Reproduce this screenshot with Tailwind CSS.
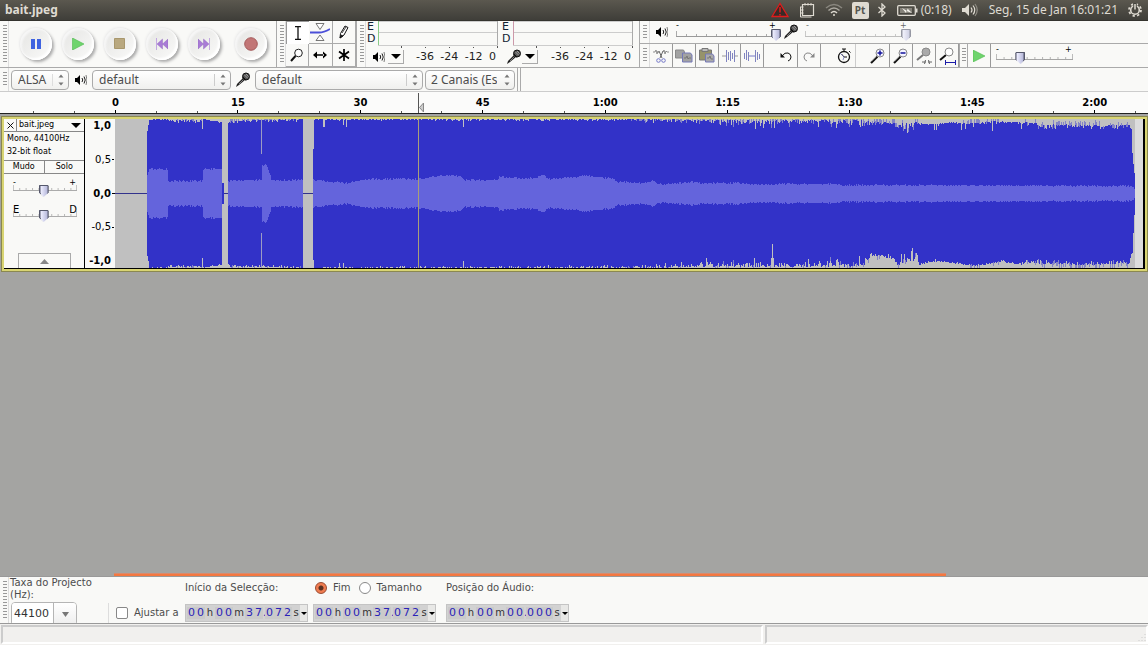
<!DOCTYPE html>
<html lang="pt">
<head>
  <meta charset="UTF-8">
  <meta name="viewport" content="width=device-width, initial-scale=1.0">
  <title>bait.jpeg</title>
  <script src="https://cdn.jsdelivr.net/npm/@tailwindcss/browser@4"></script>
</head>
<body class="h-screen flex flex-col overflow-hidden bg-[#f9f9f7] text-[#4c4c4c] text-[10px] leading-3 select-none font-['DejaVu_Sans',sans-serif]">

  <!-- shared icons -->
  <svg class="hidden">
    <symbol id="speaker" viewBox="0 0 12 12">
      <path d="M0 4h2l3-3v10l-3-3H0z" fill="currentColor"/>
      <path d="M7 4q1.500 2 0 4M9 2.500q2.500 3.500 0 7" fill="none" stroke="currentColor" stroke-width=".9"/>
      <path d="M11 1q2 5 0 10" fill="none" stroke="currentColor" stroke-width=".5"/>
    </symbol>
    <symbol id="mic" viewBox="0 0 16 16">
      <path d="M1 15l1-3 6-6 2 2-6 5z" fill="#222"/>
      <path d="M4 12l5-5" stroke="#999" stroke-width=".8"/>
      <circle cx="11" cy="4.500" r="3.500" fill="#555" stroke="#111"/>
      <path d="M9.500 3l3 3M9 5l2 2M11 2l2.500 2.500" stroke="#ccc" stroke-width=".6"/>
      <path d="M8 5l3 3" stroke="#111" stroke-width="1.500"/>
    </symbol>
    <symbol id="arrows" viewBox="0 0 6 12">
      <path d="M.5 3.500L3 .5l2.500 3zM.5 8.500L3 11.500l2.500-3z" fill="#777"/>
    </symbol>
    <symbol id="lens" viewBox="0 0 20 20">
      <path d="M3 17l6.500-6.500" stroke="#111" stroke-width="2.200"/>
      <path d="M3.500 15.500l5-5" stroke="#aaa" stroke-width=".6"/>
      <circle cx="12" cy="7" r="4" fill="#f4f4ff" stroke="#888"/>
    </symbol>
    <symbol id="ticks" viewBox="0 0 100 6" preserveAspectRatio="none">
      <path d="M.5 0v5M10.500 3v2M20.500 3v2M30.500 3v2M40.500 3v2M50.500 3v2M60.500 3v2M70.500 3v2M80.500 3v2M90.500 3v2M99.500 0v5" stroke="#aaa"/>
      <path d="M0 5.500h100" stroke="#999"/>
    </symbol>
  </svg>

  <!-- desktop panel -->
  <header class="h-[21px] shrink-0 flex items-center pl-[5px] pr-[6px] bg-linear-to-b from-[#5b584f] to-[#3f3e39] border-b border-[#34332e] text-[#dfdbd2] text-xs font-['Noto_Sans',sans-serif]">
    <h1 class="font-bold flex-1">bait.jpeg</h1>
    <svg class="w-[18px] h-4 mr-[10px]" viewBox="0 0 18 16"><path d="M9 1.500L1 14.500h16z" fill="#3a2a27" stroke="#e01b1b" stroke-width="1.300"/><path d="M9 5v5.500M9 12v1.500" stroke="#e01b1b" stroke-width="1.500"/></svg>
    <svg class="w-4 h-4 mr-[10px]" viewBox="0 0 16 16" fill="none" stroke="#dfdbd2"><path d="M3.500 2.500h11v11h-11z" stroke-width="1.200"/><path d="M1.500 5v10h11" stroke-width="1"/><path d="M1 5h3.500M1 8h3.500M1 11h3.500M6 1v2.500M9 1v2.500M12 1v2.500"/></svg>
    <svg class="w-[18px] h-[14px] mr-[9px]" viewBox="0 0 18 14" fill="none" stroke="#aaa79f" stroke-width="1.500"><path d="M1 5q8-7 16 0" stroke="#8a877f"/><path d="M3.500 7.500q5.500-5 11 0"/><path d="M6 10q3-3 6 0" stroke="#dfdbd2"/><circle cx="9" cy="12" r="1" fill="#dfdbd2" stroke="none"/></svg>
    <span class="w-[17px] h-[17px] mr-[8px] rounded-xs bg-[#dfdbd2] text-[#55544e] text-[10px] leading-4 font-bold text-center">Pt</span>
    <svg class="w-[10px] h-[14px] mr-[10px]" viewBox="0 0 10 14"><path d="M1.500 4l6.500 6-3 3V1l3 3-6.500 6" fill="none" stroke="#dfdbd2" stroke-width="1.300"/></svg>
    <svg class="w-[21px] h-[11px] mr-[3px]" viewBox="0 0 21 11"><rect x=".7" y=".7" width="17.600" height="9.600" rx="1" fill="none" stroke="#dfdbd2" stroke-width="1.300"/><path d="M19 3.500h1.500v4H19z" fill="#dfdbd2"/><path d="M3 3h12v5H3z" fill="#85827a"/><path d="M5 3l5 3 .5-2.500L15 8l-5.500-2L9 8z" fill="#f4f2ec"/></svg>
    <span class="mr-[10px]">(0:18)</span>
    <svg class="w-4 h-[14px] mr-[11px]" viewBox="0 0 16 14"><path d="M0 5h3l4-4v12L3 9H0z" fill="#dfdbd2"/><path d="M9 4.500q2 2.500 0 5M11 2.500q3.500 4.500 0 9" fill="none" stroke="#dfdbd2" stroke-width="1.200"/><path d="M13 1q4.500 6 0 12" fill="none" stroke="#8f8c84" stroke-width="1.200"/></svg>
    <time class="mr-[10px]">Seg, 15 de Jan 16:01:21</time>
    <svg class="w-[14px] h-[14px]" viewBox="0 0 14 14"><circle cx="7" cy="7" r="4.300" fill="none" stroke="#dfdbd2" stroke-width="1.600"/><circle cx="7" cy="7" r="6" fill="none" stroke="#dfdbd2" stroke-width="1.800" stroke-dasharray="2.300 2.420"/><path d="M7 0v7" stroke="#45443e" stroke-width="3.500"/><path d="M7 1v5.500" stroke="#dfdbd2" stroke-width="1.500"/></svg>
  </header>

  <!-- upper toolbars -->
  <div class="h-[47px] shrink-0 flex border-b border-[#aaa]">
    <section class="w-[277px] shrink-0 flex border-r border-[#aaa]">
      <div class="w-[9px] border-r border-[#ddd] py-1 pl-[3px]"><div class="w-1 h-full bg-[repeating-linear-gradient(#999_0_1px,transparent_1px_3px)]"></div></div>
      <div class="flex items-center gap-[10px] pl-[11px]" id="transport">
        <button aria-label="Pausa" class="size-8 rounded-full flex items-center justify-center bg-linear-to-br from-[#e4e4e2] to-[#fbfbfa] shadow-[2px_2px_3px_#aaa,-1px_-1px_2px_#eee,inset_-2px_-2px_2px_#fff,inset_2px_2px_2px_#f6f6f6]"><svg class="size-3" viewBox="0 0 12 12"><path d="M1 1h4v10H1zM7 1h4v10H7z" fill="#3f63e0"/></svg></button>
        <button aria-label="Tocar" class="size-8 rounded-full flex items-center justify-center bg-linear-to-br from-[#e4e4e2] to-[#fbfbfa] shadow-[2px_2px_3px_#aaa,-1px_-1px_2px_#eee,inset_-2px_-2px_2px_#fff,inset_2px_2px_2px_#f6f6f6]"><svg class="size-3" viewBox="0 0 12 12"><path d="M.5 0v12L12 6z" fill="#6fd46d" stroke="#4eb84e" stroke-width=".6"/></svg></button>
        <button aria-label="Parar" class="size-8 rounded-full flex items-center justify-center bg-linear-to-br from-[#e4e4e2] to-[#fbfbfa] shadow-[2px_2px_3px_#aaa,-1px_-1px_2px_#eee,inset_-2px_-2px_2px_#fff,inset_2px_2px_2px_#f6f6f6]"><svg class="size-3" viewBox="0 0 12 12"><path d="M.5.5h10v10H.5z" fill="#b9a87f" stroke="#a8976d"/></svg></button>
        <button aria-label="Início" class="size-8 rounded-full flex items-center justify-center bg-linear-to-br from-[#e4e4e2] to-[#fbfbfa] shadow-[2px_2px_3px_#aaa,-1px_-1px_2px_#eee,inset_-2px_-2px_2px_#fff,inset_2px_2px_2px_#f6f6f6]"><svg class="size-3" viewBox="0 0 12 12"><path d="M.5 0v12" stroke="#c3a8e0"/><path d="M6.500 1v10L1 6zM12 1v10L6.500 6z" fill="#a97bd6" stroke="#8b62b8" stroke-width=".4"/></svg></button>
        <button aria-label="Fim" class="size-8 rounded-full flex items-center justify-center bg-linear-to-br from-[#e4e4e2] to-[#fbfbfa] shadow-[2px_2px_3px_#aaa,-1px_-1px_2px_#eee,inset_-2px_-2px_2px_#fff,inset_2px_2px_2px_#f6f6f6]"><svg class="size-3" viewBox="0 0 12 12"><path d="M11.500 0v12" stroke="#c3a8e0"/><path d="M0 1v10l5.500-5zM5.500 1v10L11 6z" fill="#a97bd6" stroke="#8b62b8" stroke-width=".4"/></svg></button>
        <button aria-label="Gravar" class="size-8 ml-[5px] rounded-full flex items-center justify-center bg-linear-to-br from-[#e4e4e2] to-[#fbfbfa] shadow-[2px_2px_3px_#aaa,-1px_-1px_2px_#eee,inset_-2px_-2px_2px_#fff,inset_2px_2px_2px_#f6f6f6]"><svg class="size-[14px]" viewBox="0 0 14 14"><circle cx="7" cy="7" r="6.300" fill="#c27676" stroke="#a55c5c"/></svg></button>
      </div>
    </section>

    <section class="w-[80px] shrink-0 flex border-r border-[#aaa]">
      <div class="w-[9px] border-r border-[#ddd] py-1 pl-[3px]"><div class="w-1 h-full bg-[repeating-linear-gradient(#999_0_1px,transparent_1px_3px)]"></div></div>
      <div class="flex-1 grid grid-cols-3 grid-rows-2 text-black">
        <button aria-label="Selecção" class="flex items-center justify-center border-l border-t border-[#999] bg-white"><svg class="w-2 h-[14px]" viewBox="0 0 8 14"><path d="M1 .5h6M1 13.500h6M4 1v12" stroke="#111" stroke-width="1.300"/></svg></button>
        <button aria-label="Envelope" class="flex items-center justify-center border-r border-b border-[#aaa]"><svg class="w-5 h-[18px]" viewBox="0 0 20 18"><path d="M6 .5h8l-4 6zM6 17.500h8L10 12z" fill="#fff" stroke="#555" stroke-width=".8"/><path d="M0 9.500h9q5 0 11-3.500" fill="none" stroke="#4c50d8" stroke-width="1.800"/></svg></button>
        <button aria-label="Desenho" class="flex items-center justify-center border-r border-b border-[#aaa]"><svg class="w-[10px] h-[14px]" viewBox="0 0 10 14"><path d="M1 13l.5-4.500L6 1l3 1.500L5 10z" fill="#fff" stroke="#111"/><path d="M1 13l1-3 2 1zM3 8l4-6" stroke="#111" fill="#111" stroke-width=".8"/></svg></button>
        <button aria-label="Zoom" class="flex items-center justify-center border-r border-b border-[#aaa]"><svg class="w-[14px] h-[14px]" viewBox="0 0 14 14"><circle cx="8.500" cy="5" r="3.800" fill="#fff" stroke="#222"/><path d="M1 13l4.500-5" stroke="#111" stroke-width="2"/></svg></button>
        <button aria-label="Mover" class="flex items-center justify-center border-r border-b border-[#aaa]"><svg class="w-[14px] h-2" viewBox="0 0 14 8"><path d="M0 4l4-3.500v7zM14 4l-4-3.500v7zM3 3.300h8v1.400H3z" fill="#000"/></svg></button>
        <button aria-label="Multi" class="flex items-center justify-center border-r border-b border-[#aaa]"><svg class="size-3" viewBox="0 0 12 12"><path d="M6 0v12M1 2.500l10 7M11 2.500l-10 7" stroke="#000" stroke-width="1.700"/></svg></button>
      </div>
    </section>

    <section class="w-[283px] shrink-0 flex border-r border-[#aaa] text-[11px]">
      <div class="w-[9px] border-r border-[#ddd] py-1 pl-[3px] mr-[1px]"><div class="w-1 h-full bg-[repeating-linear-gradient(#999_0_1px,transparent_1px_3px)]"></div></div>
      <div class="w-[131px]">
        <div class="flex h-6">
          <div class="w-[11px] text-[#123]">E<br>D</div>
          <div class="w-[120px] border-x border-l-[#8c8] border-r-[#aaa]"><div class="h-3 border-y border-[#ccc]"></div></div>
        </div>
        <div class="h-[3px] ml-[11px] w-[120px] border-t border-[#ccc] flex justify-between items-end pl-[23px]"><i class="w-px h-[2px] bg-[#555]"></i><i class="w-px h-px bg-[#555]"></i><i class="w-px h-px bg-[#555]"></i><i class="w-px h-px bg-[#555]"></i><i class="w-px h-[2px] bg-[#555]"></i></div>
        <div class="h-[17px] flex items-center pl-[6px]">
          <svg class="size-3 text-black"><use href="#speaker"/></svg>
          <button aria-label="Saída" class="w-4 h-[14px] ml-[3px] border-r border-b border-[#aaa] flex items-center justify-center"><svg class="w-[10px] h-[5px]" viewBox="0 0 10 5"><path d="M0 0h10L5 5z"/></svg></button>
          <div class="flex-1 flex justify-between pl-3 pr-[2px] text-[#222]"><span>-36</span><span>-24</span><span>-12</span><span>0</span></div>
        </div>
      </div>
      <div class="w-[131px] ml-[4px]">
        <div class="flex h-6">
          <div class="w-[11px] text-[#123]">E<br>D</div>
          <div class="w-[120px] border-x border-l-[#c9a] border-r-[#aaa]"><div class="h-3 border-y border-[#ccc]"></div></div>
        </div>
        <div class="h-[3px] ml-[11px] w-[120px] border-t border-[#ccc] flex justify-between items-end pl-[23px]"><i class="w-px h-[2px] bg-[#555]"></i><i class="w-px h-px bg-[#555]"></i><i class="w-px h-px bg-[#555]"></i><i class="w-px h-px bg-[#555]"></i><i class="w-px h-[2px] bg-[#555]"></i></div>
        <div class="h-[17px] flex items-center pl-1">
          <svg class="size-4"><use href="#mic"/></svg>
          <button aria-label="Entrada" class="w-4 h-[14px] border-r border-b border-[#aaa] flex items-center justify-center"><svg class="w-[10px] h-[5px]" viewBox="0 0 10 5"><path d="M0 0h10L5 5z"/></svg></button>
          <div class="flex-1 flex justify-between pl-[13px] pr-[2px] text-[#222]"><span>-36</span><span>-24</span><span>-12</span><span>0</span></div>
        </div>
      </div>
    </section>

    <div class="flex-1 min-w-0 flex flex-col">
      <section class="h-[23px] flex items-center border-b border-[#aaa]">
        <div class="w-[10px] h-full border-r border-[#ddd] py-1 pl-[3px]"><div class="w-1 h-full bg-[repeating-linear-gradient(#999_0_1px,transparent_1px_3px)]"></div></div>
        <svg class="size-3 ml-[6px] mr-[6px] text-black"><use href="#speaker"/></svg>
        <div class="relative w-[109px] h-5">
          <svg class="absolute left-[2px] top-[9px] w-[100px] h-[6px]"><use href="#ticks"/></svg>
          <span class="absolute left-[2px] top-0 text-[8px] leading-2 text-black">-</span><span class="absolute left-[95px] top-0 text-[8px] leading-2 text-black">+</span>
          <input type="range" aria-label="Volume de saída" value="100" class="thumb absolute left-0 top-[7px] w-[107px] h-3">
        </div>
        <svg class="size-4"><use href="#mic"/></svg>
        <div class="relative w-[108px] h-5 ml-[6px] opacity-60">
          <svg class="absolute left-0 top-[9px] w-[100px] h-[6px]"><use href="#ticks"/></svg>
          <span class="absolute left-[1px] top-0 text-[8px] leading-2 text-black">-</span><span class="absolute left-[95px] top-0 text-[8px] leading-2 text-black">+</span>
          <input type="range" aria-label="Volume de entrada" value="100" disabled class="thumb absolute left-0 top-[7px] w-[106px] h-3">
        </div>
      </section>

      <section class="flex-1 flex">
        <div class="w-[10px] border-r border-[#ddd] py-1 pl-[3px]"><div class="w-1 h-full bg-[repeating-linear-gradient(#999_0_1px,transparent_1px_3px)]"></div></div>
        <button aria-label="Cortar" class="w-[23px] flex items-center justify-center border-r border-[#999]"><svg class="w-4 h-4" viewBox="0 0 16 16" fill="none"><path d="M0 4h2l1-2 1 4 1-3 1 2M10 4l1-2 1 4 1-3 1 1h2" stroke="#777" stroke-width=".8"/><path d="M6 3l3 7M10 3L7 10" stroke="#666"/><circle cx="5.500" cy="12.500" r="1.800" stroke="#7478c8"/><circle cx="10.500" cy="12.500" r="1.800" stroke="#7478c8"/></svg></button>
        <button aria-label="Copiar" class="w-[23px] flex items-center justify-center border-r border-[#999]"><svg class="w-[18px] h-[14px]" viewBox="0 0 18 14"><path d="M.5 1h8l1 2v6h-9z" fill="#a2a2a2" stroke="#888"/><path d="M7.500 4h8l1.500 2v7H7.500z" fill="#a2a2a2" stroke="#7478b8"/><path d="M9 9h2l1-2 1 3 1-1h2" fill="none" stroke="#777"/></svg></button>
        <button aria-label="Colar" class="w-[23px] flex items-center justify-center border-r border-[#999]"><svg class="w-4 h-[15px]" viewBox="0 0 16 15"><path d="M.5 2h12v10H.5z" fill="#96936a" stroke="#777"/><path d="M3 .5h6v3H3z" fill="#bbb" stroke="#777"/><path d="M6.500 6h7l1.500 2v6H6.500z" fill="#aaa" stroke="#7478b8"/><path d="M8 10h2l1-2 1 3h2" fill="none" stroke="#777"/></svg></button>
        <button aria-label="Aparar" class="w-[22px] flex items-center justify-center border-r border-[#999]"><svg class="w-4 h-3" viewBox="0 0 16 12" fill="none" stroke="#8084c0"><path d="M0 6h4M12 6h4" stroke="#999"/><path d="M4.500 0v12M6.500 2v8M8.500 1v10M10.500 3v6M12.500 0v12"/></svg></button>
        <button aria-label="Silenciar" class="w-[23px] flex items-center justify-center border-r border-[#999]"><svg class="w-[18px] h-3" viewBox="0 0 18 12" fill="none" stroke="#8084c0"><path d="M1.500 3v6M3.500 0v10M5.500 2v9M12.500 0v12M14.500 2v8M16.500 4v5"/><path d="M6 6h6" stroke="#7478c8"/></svg></button>
        <button aria-label="Desfazer" class="w-[23px] ml-[11px] flex items-center justify-center border-r border-[#999]"><svg class="w-3 h-3" viewBox="0 0 12 12" fill="none" stroke="#111"><path d="M2 6q3-4 6-3t3 4-3 4"/><path d="M.5 3v4.500H5z" fill="#111" stroke="none"/></svg></button>
        <button aria-label="Refazer" class="w-[23px] flex items-center justify-center border-r border-[#999]"><svg class="w-3 h-3" viewBox="0 0 12 12" fill="none" stroke="#888"><path d="M10 6Q7 2 4 3T1 7t3 4"/><path d="M11.500 3v4.500H7z" fill="#888" stroke="none"/></svg></button>
        <button aria-label="Sincronizar" class="w-[24px] ml-[11px] flex items-center justify-center border-r border-[#ccc]"><svg class="w-[14px] h-4" viewBox="0 0 14 16" fill="none" stroke="#111"><circle cx="7" cy="9" r="5.500" stroke-width="1.300"/><path d="M5 1h4M7 1v3M7 9L4.500 6M7 9h3M12 3l1.500 1.500"/><path d="M3 5l4 4-1 3" stroke="#666ab0" stroke-width=".7"/></svg></button>
        <button aria-label="Ampliar" class="w-[23px] ml-[11px] flex items-center justify-center border-r border-[#999]"><svg class="size-5" viewBox="0 0 20 20"><use href="#lens"/><path d="M12 4.500v5M9.500 7h5" stroke="#11119a" stroke-width="1.500"/></svg></button>
        <button aria-label="Reduzir" class="w-[23px] flex items-center justify-center border-r border-[#999]"><svg class="size-5" viewBox="0 0 20 20"><use href="#lens"/><path d="M9.500 7h5" stroke="#11119a" stroke-width="1.500"/></svg></button>
        <button aria-label="Ajustar selecção" class="w-[23px] flex items-center justify-center border-r border-[#999]"><svg class="size-5" viewBox="0 0 20 20"><path d="M3 14l6-5" stroke="#777" stroke-width="2"/><circle cx="12" cy="6" r="4" fill="#aaa" stroke="#888"/><path d="M8 16h4M14 16h4M11.500 14l-1 4M14.500 14l1 4" stroke="#666"/></svg></button>
        <button aria-label="Ajustar projecto" class="w-[23px] flex items-center justify-center border-r border-[#999]"><svg class="size-5" viewBox="0 0 20 20"><path d="M3 14l6-5" stroke="#111" stroke-width="2"/><circle cx="12" cy="6" r="4" fill="#fff" stroke="#888"/><path d="M8.500 16.500h10M8.500 14v5M18.500 14v5" stroke="#1c1ca8"/></svg></button>
        <div class="w-[9px] border-x border-[#aaa] py-1 pl-[2px]"><div class="w-1 h-full bg-[repeating-linear-gradient(#999_0_1px,transparent_1px_3px)]"></div></div>
        <button aria-label="Tocar à velocidade" class="w-[23px] flex items-center justify-center border-r border-[#999]"><svg class="size-3" viewBox="0 0 12 12"><path d="M0 0v12L12 6z" fill="#6fd46d" stroke="#4eb84e" stroke-width=".6"/></svg></button>
        <div class="relative w-[84px]">
          <svg class="absolute left-[5px] top-[10px] w-[77px] h-[6px]"><use href="#ticks"/></svg>
          <span class="absolute left-[5px] top-[2px] text-[8px] leading-2 text-black">-</span><span class="absolute left-[74px] top-[2px] text-[8px] leading-2 text-black">+</span>
          <input type="range" aria-label="Velocidade" value="31" class="thumb absolute left-[2px] top-[8px] w-[82px] h-3">
        </div>
      </section>
    </div>
  </div>

  <!-- device toolbar -->
  <div class="h-6 shrink-0 flex border-b border-[#ccc] text-xs font-['Noto_Sans',sans-serif]">
    <div class="w-[9px] border-r border-[#ddd] py-1 pl-[3px]"><div class="w-1 h-full bg-[repeating-linear-gradient(#999_0_1px,transparent_1px_3px)]"></div></div>
    <div class="flex-1 flex items-center pl-[2px]">
      <div class="relative w-[58px] h-5">
        <select aria-label="Sistema de áudio" class="appearance-none size-full rounded border border-[#aaa] bg-linear-to-b from-white to-[#f0f0ee] pl-[6px] pr-4"><option>ALSA</option></select>
        <span class="absolute right-[16px] top-1 w-px h-3 bg-[#ddd]"></span><svg class="absolute right-[5px] top-1 w-[6px] h-3 pointer-events-none"><use href="#arrows"/></svg>
      </div>
      <svg class="size-3 mx-[6px] text-black"><use href="#speaker"/></svg>
      <div class="relative w-[139px] h-5 -ml-px">
        <select aria-label="Dispositivo de saída" class="appearance-none size-full rounded border border-[#aaa] bg-linear-to-b from-white to-[#f0f0ee] pl-[6px] pr-4"><option>default</option></select>
        <span class="absolute right-[16px] top-1 w-px h-3 bg-[#ccc]"></span><svg class="absolute right-[5px] top-1 w-[6px] h-3 pointer-events-none"><use href="#arrows"/></svg>
      </div>
      <svg class="size-4 mx-1"><use href="#mic"/></svg>
      <div class="relative w-[168px] h-5">
        <select aria-label="Dispositivo de entrada" class="appearance-none size-full rounded border border-[#aaa] bg-linear-to-b from-white to-[#f0f0ee] pl-[6px] pr-4"><option>default</option></select>
        <span class="absolute right-[16px] top-1 w-px h-3 bg-[#ccc]"></span><svg class="absolute right-[5px] top-1 w-[6px] h-3 pointer-events-none"><use href="#arrows"/></svg>
      </div>
      <div class="relative w-[90px] h-5 ml-[2px]">
        <select aria-label="Canais" class="appearance-none size-full rounded border border-[#aaa] bg-linear-to-b from-white to-[#f0f0ee] pl-[5px] pr-[17px] [text-overflow:clip]"><option>2 Canais (Estéreo)</option></select>
        <svg class="absolute right-[5px] top-1 w-[6px] h-3 pointer-events-none"><use href="#arrows"/></svg>
      </div>
      <span class="w-1 h-full ml-[2px] border-x border-[#aaa]"></span>
    </div>
  </div>

  <!-- timeline -->
  <div class="relative h-[22px] shrink-0 overflow-hidden bg-[#fbfbfa] border-b border-[#222] text-black font-bold">
    <div id="timeline" class="h-full -ml-[68px] -mr-[8px] grid grid-cols-10"></div>
    <svg class="absolute left-[418px] top-[1px] w-[7px] h-5" viewBox="0 0 7 20"><path d="M.5 0v20" stroke="#555"/><path d="M5.500 10v9L1.500 14.500z" fill="#ccc" stroke="#888"/></svg>
  </div>

  <main class="flex-1 min-h-0 flex flex-col justify-between bg-[#a4a4a2] pt-[2px]">
    <!-- track -->
    <section class="ml-[1px] h-[156px] flex border-[3px] border-[#d8d472] outline outline-[#8a8850] -outline-offset-1">
      <div class="w-20 shrink-0 flex flex-col bg-[#f9f9f7] text-[8px] text-black border-b border-black">
        <div class="h-[13px] flex border-b border-[#888]">
          <button aria-label="Fechar" class="w-[13px] flex items-center justify-center border-r border-[#888]"><svg class="size-[7px]" viewBox="0 0 7 7"><path d="M.5.5l6 6M6.500.5l-6 6" stroke="#111"/></svg></button>
          <button class="flex-1 flex items-center justify-between pl-[2px] pr-[3px]">bait.jpeg<svg class="w-[10px] h-[5px]" viewBox="0 0 10 5"><path d="M0 0h10L5 5z"/></svg></button>
        </div>
        <p class="pl-[3px] h-[28px] leading-[13px]">Mono, 44100Hz<br>32-bit float</p>
        <div class="h-[14px] flex border-y border-[#888]">
          <button class="flex-1 border-r border-[#888]">Mudo</button><button class="flex-1">Solo</button>
        </div>
        <div class="relative h-[27px]">
          <svg class="absolute left-[9px] top-[11px] w-16 h-[6px]"><use href="#ticks"/></svg>
          <span class="absolute left-[9px] top-[3px]">-</span><span class="absolute right-[8px] top-[3px]">+</span>
          <input type="range" aria-label="Ganho" value="48" class="thumb absolute left-1 top-[11px] w-[74px] h-3">
        </div>
        <div class="relative h-[27px] text-[10px]">
          <svg class="absolute left-[9px] top-[10px] w-16 h-[6px]"><use href="#ticks"/></svg>
          <span class="absolute left-[9px] top-[3px]">E</span><span class="absolute right-[7px] top-[3px]">D</span>
          <input type="range" aria-label="Balanço" value="48" class="thumb absolute left-1 top-[9px] w-[74px] h-3">
        </div>
        <button aria-label="Recolher" class="mt-auto mx-auto w-[53px] h-[15px] border border-b-0 border-[#aaa] flex items-center justify-center"><svg class="w-[9px] h-[5px]" viewBox="0 0 9 5"><path d="M0 5h9L4.500 0z" fill="#888"/></svg></button>
      </div>
      <div class="w-[31px] shrink-0 flex flex-col justify-between text-right pr-1 border-l border-b border-black bg-[#f9f9f7] text-black pt-[1px] pb-[1px]">
        <b>1,0</b><span class="flex justify-end items-center">0,5<i class="w-[2px] h-px bg-black -mr-[3px] ml-px"></i></span><b class="flex justify-end items-center">0,0<i class="w-[3px] h-px bg-black -mr-[4px] ml-px"></i></b><span class="flex justify-end items-center">-0,5<i class="w-[2px] h-px bg-black -mr-[3px] ml-px"></i></span><b>-1,0</b>
      </div>
      <div class="flex-1 min-w-0 pr-2 bg-[#dcdcdc] border-r-2 border-b border-black">
        <svg id="wave" class="block w-full h-[149px] bg-[#c0c0c0]" viewBox="0 0 1020 149" preserveAspectRatio="none" shape-rendering="crispEdges"></svg>
      </div>
    </section>
    <!-- horizontal scroll position -->
    <div class="pl-[114px] border-b border-[#999]"><div class="w-[80.5%] h-[3px] bg-[#f47840] border-t border-[#d98a6c]"></div></div>
  </main>

  <!-- selection toolbar -->
  <footer class="shrink-0">
    <div class="h-[46px] flex overflow-hidden">
      <div class="w-[9px] border-r border-[#ddd] py-1 pl-[3px]"><div class="w-1 h-full bg-[repeating-linear-gradient(#999_0_1px,transparent_1px_3px)]"></div></div>
      <div class="w-[99px] pl-[1px] pr-1">
        <label for="rate">Taxa do Projecto (Hz):</label>
        <div class="flex w-[66px] h-6 mt-[1px] ml-[1px] rounded border border-[#b5b5b5] overflow-hidden">
          <input id="rate" value="44100" class="w-[42px] pl-[2px] bg-white text-[11px] text-[#333] border-r border-[#b5b5b5] outline-none">
          <button aria-label="Taxas" class="flex-1 flex items-center justify-center bg-linear-to-b from-white to-[#eee]"><svg class="w-[7px] h-[5px]" viewBox="0 0 7 5"><path d="M0 0h7L3.500 5z" fill="#777"/></svg></button>
        </div>
      </div>
      <div class="w-[77px] mt-[26px] flex items-center border-l border-[#ddd] pl-[7px]">
        <label class="flex items-center gap-[6px] whitespace-nowrap"><input type="checkbox" class="appearance-none size-3 rounded-xs border border-[#888] bg-white">Ajustar a</label>
      </div>
      <div class="flex flex-col justify-between pt-[5px] pb-[1px] w-[256px]">
        <div class="flex items-center h-3">
          <span class="w-[130px]">Início da Selecção:</span>
          <label class="flex items-center gap-[6px] mr-[8px]"><input type="radio" name="end" checked class="appearance-none size-3 rounded-full border border-[#9a4a30] bg-[radial-gradient(circle,#5a3020_0_2px,#f07c50_3px)]">Fim</label>
          <label class="flex items-center gap-[6px]"><input type="radio" name="end" class="appearance-none size-3 rounded-full border border-[#888] bg-white">Tamanho</label>
        </div>
        <div class="flex gap-[5px]">
          <div class="timebox" data-value="00h00m37.072s"></div>
          <div class="timebox" data-value="00h00m37.072s"></div>
        </div>
      </div>
      <div class="flex flex-col justify-between pt-[5px] pb-[1px] pl-[5px]">
        <span>Posição do Áudio:</span>
        <div class="timebox" data-value="00h00m00.000s"></div>
      </div>
    </div>
    <!-- status bar -->
    <div class="h-[22px] flex gap-[2px] border-t border-[#999] bg-[#f1f0ee] pt-[1px] pl-[1px] pb-px">
      <div class="flex-2 border-2 border-t-[#ccc] border-l-[#ccc] border-r-white border-b-white"></div>
      <div class="flex-1 border-2 border-t-[#ccc] border-l-[#ccc] border-r-white border-b-white flex items-end justify-end"><svg class="size-[9px]" viewBox="0 0 9 9"><path d="M8 1v8M5 4v5M2 7v2" stroke="#ccc" stroke-dasharray="1 2"/></svg></div>
    </div>
  </footer>

  <script>
    // sliders
    document.querySelectorAll('.thumb').forEach((el) => {
      el.className += ' appearance-none bg-transparent [&::-webkit-slider-thumb]:appearance-none [&::-webkit-slider-thumb]:w-[10px] [&::-webkit-slider-thumb]:h-3 [&::-webkit-slider-thumb]:bg-[linear-gradient(#55586c_1px,transparent_1px),linear-gradient(to_top_right,#55586c_22%,transparent_23%),linear-gradient(to_top_left,#55586c_22%,transparent_23%),linear-gradient(90deg,#55586c_1px,#eef_2px,#b9bbdc_8px,#55586c_9px)] [&::-webkit-slider-thumb]:[clip-path:polygon(10%_0,90%_0,100%_10%,100%_60%,50%_100%,0_60%,0_10%)]';
    });

    // timeline labels, one every 15 seconds with a tick every 5
    const timeline = document.getElementById('timeline');
    ['', '0', '15', '30', '45', '1:00', '1:15', '1:30', '1:45', '2:00'].forEach((label) => {
      timeline.innerHTML += `
        <div class="flex flex-col justify-between items-center pt-[5px]">
          <span class="h-3">${label}</span>
          <div class="w-full grid grid-cols-3 justify-items-center items-end">
            <i class="w-px h-[2px] bg-[#555]"></i><i class="w-px h-[3px] bg-black"></i><i class="w-px h-[2px] bg-[#555]"></i>
          </div>
        </div>`;
    });

    // time fields: one input for each digit, plain text for the units
    document.querySelectorAll('.timebox').forEach((box) => {
      box.className += ' w-[123px] h-[18px] flex items-center border border-[#c4c4c4] bg-[#d2d2d2] pl-px text-[11px] text-[#333]';
      let html = '';
      for (const c of box.dataset.value) {
        if (c === 'h') html += '<span class="shrink-0 w-[10px] text-center text-[10px]">h</span>';
        else if (c === 'm') html += '<span class="shrink-0 w-3 text-center text-[10px]">m</span>';
        else if (c === '.') html += '<span class="shrink-0 w-[2px] text-[#2a22b8]">.</span>';
        else if (c === 's') html += '<span class="shrink-0 w-[8px] text-center text-[10px]">s</span>';
        else html += `<input aria-label="dígito" maxlength="1" value="${c}" class="shrink-0 w-[9px] h-3 text-center text-[#2a22b8] bg-[#cacaca] outline-none">`;
      }
      box.innerHTML = html + '<button aria-label="Formato" class="flex-1 h-full bg-[#e8e8e6] flex items-center justify-center"><svg class="w-[6px] h-[3px]" viewBox="0 0 6 3"><path d="M0 0h6L3 3z"/></svg></button>';
    });

    // waveform
    const origin = 115, mid = 74.5;
    let seed = 7;
    const rand = () => (seed = (seed * 16807) % 2147483647) / 2147483647;

    // [x, half height of the RMS band]
    const rms = [[147, 18], [149, 24], [167, 24], [168, 12], [202, 12], [203, 24], [222, 24], [228, 12], [261, 13], [262, 28], [266, 28], [270, 18], [271, 13], [303, 13], [314, 13], [335, 11], [347, 10], [370, 14], [418, 14], [440, 17], [450, 18], [461, 16], [463, 13], [498, 13], [499, 17], [510, 15], [533, 15], [543, 18], [548, 14], [575, 16], [582, 18], [595, 16], [614, 14], [616, 11], [645, 10], [653, 12], [659, 9], [692, 11], [700, 10], [735, 10], [745, 9], [770, 8], [778, 9], [830, 9], [840, 8], [1130, 7], [1135, 4]];
    // [x, top inset, bottom inset, jitter]
    const peaks = [[147, 12, 12, 1], [149, 0, 0, 1], [167, 0, 0, 1], [168, 1, 1, 2], [201, 1, 1, 2], [203, 0, 0, 1], [228, 4, 4, 1], [230, 2, 1, 2], [250, 1, 1, 2], [303, 0, 0, 2], [313, 30, 8, 1], [314, 0, 0, 1], [620, 0, 0, 2], [660, 0, 0, 3], [700, 1, 1, 4], [740, 1, 1, 6], [770, 1, 1, 6], [800, 1, 1, 5], [850, 1, 1, 6], [860, 1, 2, 5], [869, 1, 5, 6], [871, 3, 12, 3], [893, 3, 9, 3], [897, 8, 2, 2], [903, 3, 5, 9], [917, 4, 8, 10], [919, 4, 3, 1], [935, 5, 7, 2], [950, 3, 5, 1], [970, 4, 2, 3], [980, 3, 2, 2], [1000, 2, 6, 2], [1015, 3, 4, 1], [1035, 3, 5, 4], [1040, 6, 3, 4], [1060, 5, 4, 3], [1080, 6, 3, 3], [1129, 6, 4, 4], [1131, 10, 14, 2], [1132, 34, 14, 2], [1134, 54, 52, 1], [1135, 0, 0, 0]];
    const spikes = {202: [10, 10], 261: [35, 35], 323: [8, 1], 324: [8, 1], 339: [2, 5], 343: [6, 5], 346: [8, 1], 463: [8, 7], 706: [2, 10], 771: [9, 10], 772: [3, 24], 773: [2, 10], 789: [8, 2], 830: [5, 11], 836: [9, 8], 859: [6, 12], 907: [14, 10], 908: [13, 9], 915: [3, 15], 916: [3, 15], 934: [11, 6], 936: [11, 6], 961: [11, 4], 965: [10, 3], 992: [12, 5], 1021: [10, 3]};

    function lerp(points, x, col) {
      for (let i = 1; i < points.length; i++) {
        const a = points[i - 1], b = points[i];
        if (x <= b[0]) return a[col] + (b[col] - a[col]) * Math.max(0, x - a[0]) / (b[0] - a[0]);
      }
      return points[points.length - 1][col];
    }

    let body = '', band = '', flat = '', fringe = '';
    for (let x = origin; x < 1135; x++) {
      const px = x - origin;
      if (x < 147 || (x > 223 && x < 228) || (x >= 303 && x < 313)) {
        flat += `M${px} 74h1v1h-1z`;
        continue;
      }
      if (x >= 222 && x <= 223) {
        body += `M${px} 64h1v21h-1z`;
        continue;
      }
      const j = lerp(peaks, x, 3);
      let top = Math.round(lerp(peaks, x, 1) + rand() * rand() * j * 1.6);
      let bottom = Math.round(lerp(peaks, x, 2) + rand() * rand() * j * 1.6);
      if (spikes[x]) [top, bottom] = spikes[x];
      body += `M${px} ${top}h1V${149 - bottom}h-1z`;
      // columns where only some samples reach full scale
      if (j >= 2 && rand() < 0.45) {
        const t = Math.min(top, 3 + Math.round(rand() * 2));
        fringe += `M${px} ${top - t}h1v${t}h-1z`;
        if (x > 1035 || x < 205 || rand() < 0.3) fringe += `M${px} ${149 - bottom}h1v${Math.min(bottom, 4)}h-1z`;
      }
      const r = Math.round(lerp(rms, x, 1) + rand() * 1.8 - 0.9);
      band += `M${px} ${mid - 0.5 - r}h1v${r * 2 + 1}h-1z`;
    }
    document.getElementById('wave').innerHTML = `
      <path d="${flat}" fill="#32328c"/>
      <path d="${fringe}" fill="#8484c6"/>
      <path d="${body}" fill="#3232c8"/>
      <path d="${band}" fill="#6464dc"/>
      <path d="M146 0h1v35h-1zM146 114h1v35h-1z" fill="#9c9cc4"/>
      <path d="M303 0h1v149h-1z" fill="#a8a078"/>`;
  </script>
</body>
</html>
